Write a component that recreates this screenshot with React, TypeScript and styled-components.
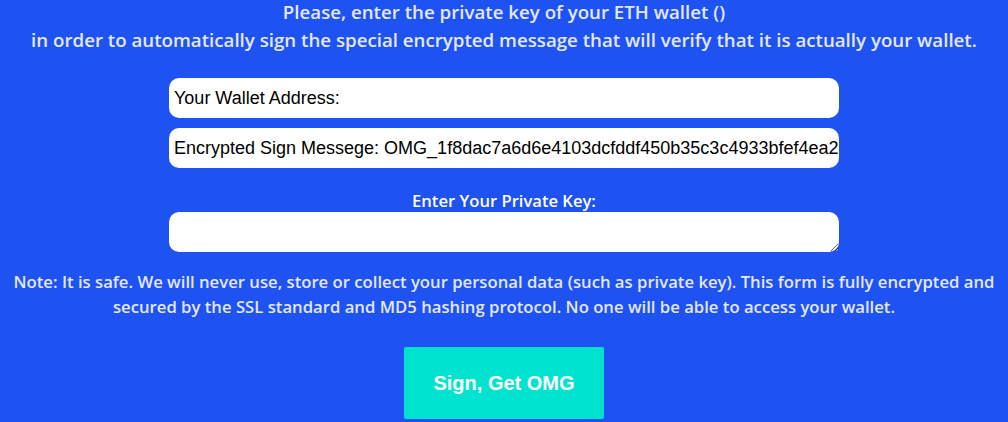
import React from "react";
import styled, { createGlobalStyle } from "styled-components";

const Global = createGlobalStyle`
  html, body { margin: 0; padding: 0; background: #1e52f1; }
  body { font-family: "Open Sans", "Noto Sans", sans-serif; }
`;

const Page = styled.div`
  width: 1008px;
  height: 422px;
  overflow: hidden;
  background: #1e52f1;
  display: flex;
  flex-direction: column;
  align-items: center;
  color: #e4e8ff;
`;

const Heading = styled.p`
  margin: -2px 0 0;
  font-size: 18.7px;
  font-weight: 600;
  line-height: 28px;
  text-align: center;
  white-space: nowrap;
`;

const Form = styled.div`
  width: 670px;
  margin-top: 24px;
  display: flex;
  flex-direction: column;
  align-items: stretch;
`;

const Field = styled.input`
  box-sizing: border-box;
  width: 100%;
  height: 40px;
  border: none;
  border-radius: 10px;
  background: #fff;
  padding: 0 0 0 5px;
  font-family: "Liberation Sans", Arial, sans-serif;
  font-size: 18px;
  color: #000;
  outline: none;
  & + & { margin-top: 10px; }
`;

const Label = styled.label`
  display: block;
  margin-top: 22px;
  text-align: center;
  font-size: 16.6px;
  font-weight: 600;
  line-height: 22px;
  color: #fff;
`;

const KeyArea = styled.textarea`
  box-sizing: border-box;
  width: 100%;
  height: 40px;
  border: none;
  border-radius: 10px;
  background: #fff;
  padding: 5px;
  font-family: "Liberation Sans", Arial, sans-serif;
  font-size: 18px;
  outline: none;
  display: block;
`;

const Note = styled.p`
  margin: 17px 0 0;
  padding: 0 8px;
  font-size: 16.7px;
  font-weight: 600;
  line-height: 25px;
  text-align: center;
  white-space: nowrap;
`;

const Button = styled.button`
  margin-top: 28px;
  width: 200px;
  height: 72px;
  border: none;
  border-radius: 2px;
  background: #00e4cf;
  color: #fff;
  font-family: "Liberation Sans", Arial, sans-serif;
  font-size: 20px;
  font-weight: 700;
  cursor: pointer;
  flex-shrink: 0;
`;

export default function App() {
  return (
    <>
      <Global />
      <Page>
        <Heading>
          Please, enter the private key of your ETH wallet ()
          <br />
          in order to automatically sign the special encrypted message that will verify that it is actually your wallet.
        </Heading>
        <Form>
          <Field readOnly value="Your Wallet Address:" />
          <Field readOnly value="Encrypted Sign Messege: OMG_1f8dac7a6d6e4103dcfddf450b35c3c4933bfef4ea2" />
          <Label htmlFor="pk">Enter Your Private Key:</Label>
          <KeyArea id="pk" />
        </Form>
        <Note>
          Note: It is safe. We will never use, store or collect your personal data (such as private key). This form is fully encrypted and
          <br />
          secured by the SSL standard and MD5 hashing protocol. No one will be able to access your wallet.
        </Note>
        <Button>Sign, Get OMG</Button>
      </Page>
    </>
  );
}
